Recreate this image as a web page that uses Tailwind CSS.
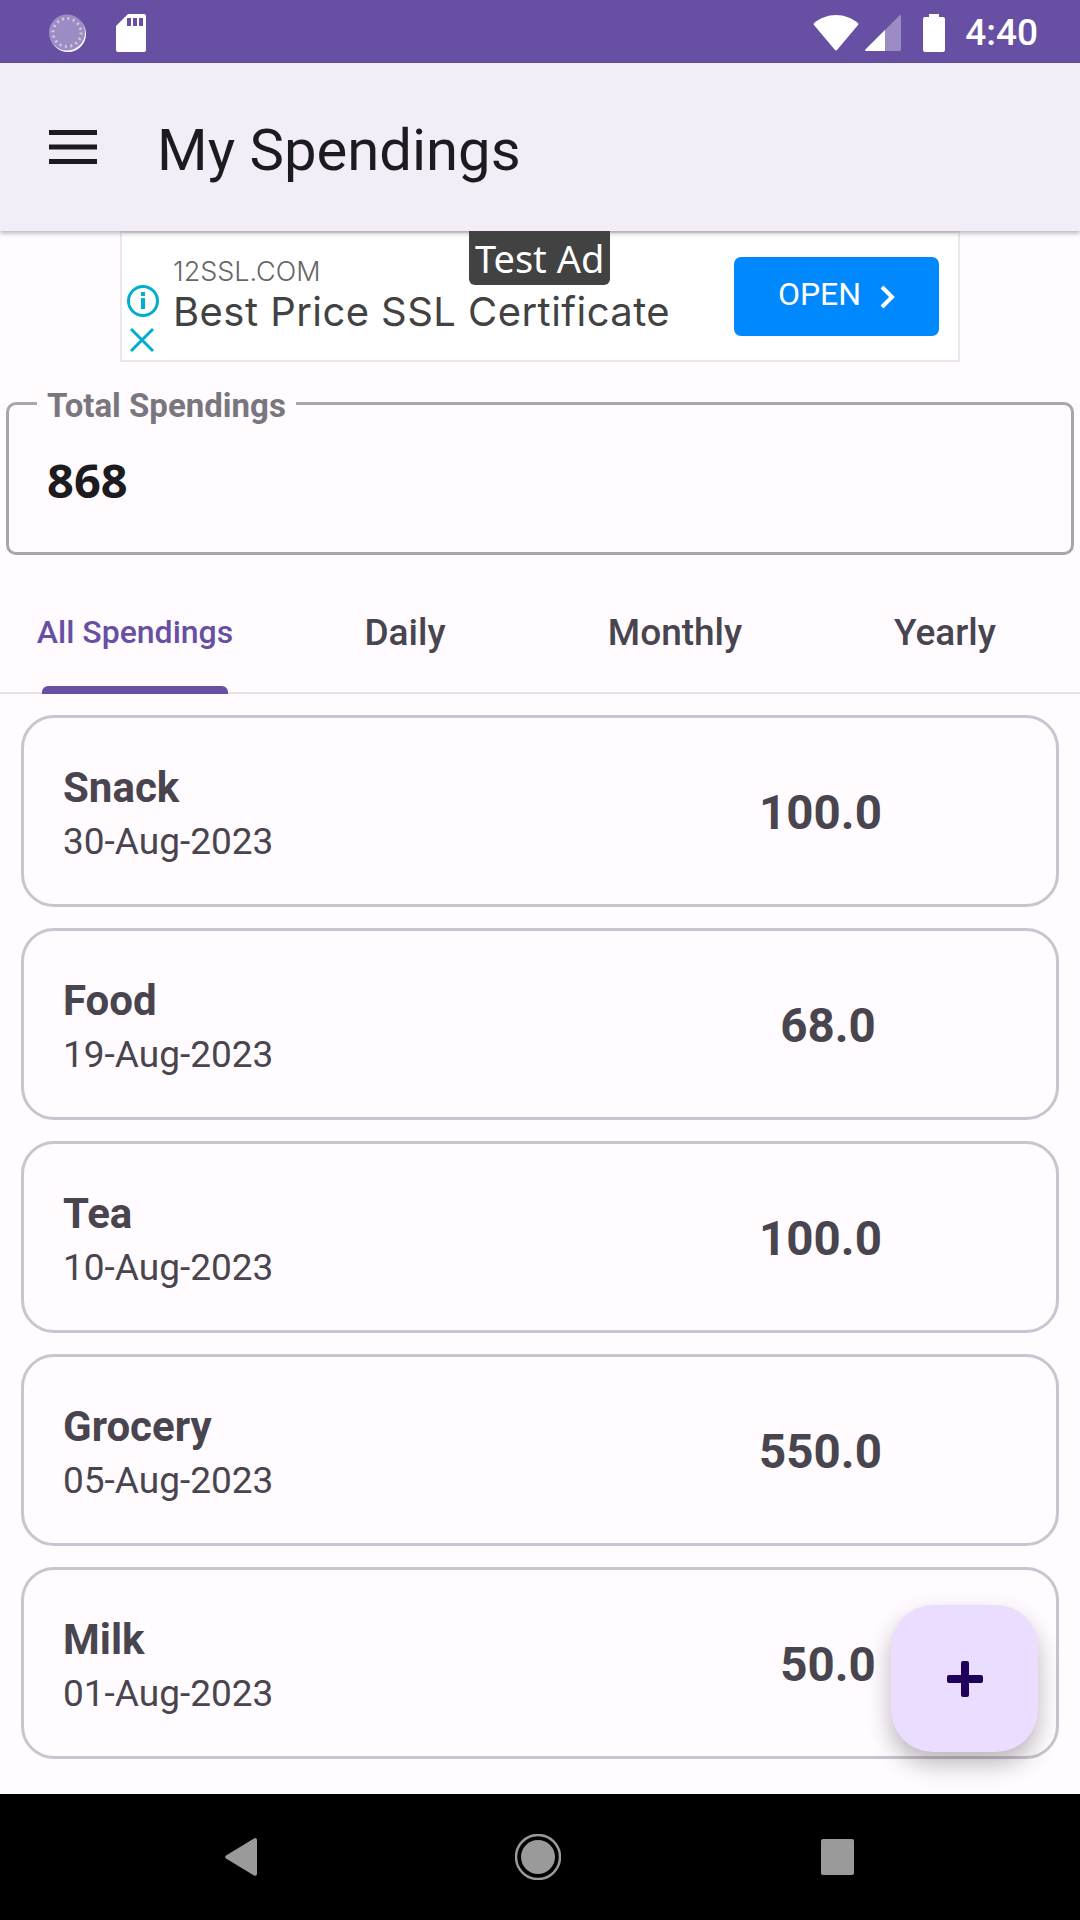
<!DOCTYPE html>
<html lang="en">
<head>
  <meta charset="UTF-8" />
  <meta name="viewport" content="width=device-width, initial-scale=1" />
  <title>My Spendings</title>
  <script src="https://cdn.jsdelivr.net/npm/@tailwindcss/browser@4"></script>
</head>
<body class="bg-[#fffbfe] font-['Roboto',sans-serif] text-[#1c1b1f]">
  <div class="relative flex h-[1920px] w-[1080px] flex-col overflow-hidden">
    <!-- status bar -->
    <div class="flex h-[63px] shrink-0 items-center justify-between bg-[#6750a4] pl-[48px] pr-[42px] pt-[2px] text-white">
      <div class="flex items-center gap-[30px]">
        <svg class="h-[38px] w-[38px]" viewBox="0 0 38 38">
          <circle cx="20" cy="20" r="18" fill="#fff"/>
          <circle cx="19" cy="18.5" r="18" fill="#9c8cc4"/>
          <circle cx="19" cy="18.5" r="14" fill="none" stroke="#cfc6e2" stroke-width="3" stroke-dasharray="2 3.5"/>
        </svg>
        <svg class="h-[38px] w-[30px]" viewBox="0 0 30 38">
          <path d="M12 0h16a2 2 0 0 1 2 2v34a2 2 0 0 1-2 2H2a2 2 0 0 1-2-2V12z" fill="#fff"/>
          <path d="M11 4h4v8h-4zM17 4h4v8h-4zM23 4h4v8h-4z" fill="#6750a4"/>
        </svg>
      </div>
      <div class="flex items-center">
        <svg class="h-[38px] w-[46px]" viewBox="0 0 46 38"><path d="M1 9C7 4 15 1 23 1s16 3 22 8a1.5 1.5 0 0 1 0 2L24 36a1.5 1.5 0 0 1-2 0L1 11a1.5 1.5 0 0 1 0-2z" fill="#fff"/></svg>
        <svg class="ml-[6px] h-[36px] w-[36px]" viewBox="0 0 36 36"><path d="M35 0a1 1 0 0 1 1 1v33a2 2 0 0 1-2 2H1a1 1 0 0 1-1-1z" fill="#9c8cc4"/><path d="M20 15v21H1a1 1 0 0 1-1-1z" fill="#fff"/></svg>
        <svg class="ml-[22px] h-[38px] w-[22px]" viewBox="0 0 22 38"><path d="M6 0h10v3h4a2 2 0 0 1 2 2v31a2 2 0 0 1-2 2H2a2 2 0 0 1-2-2V5a2 2 0 0 1 2-2h4z" fill="#fff"/></svg>
        <span class="ml-[20px] text-[37px] leading-none font-medium">4:40</span>
      </div>
    </div>

    <!-- app bar -->
    <header class="relative z-10 flex h-[168px] shrink-0 items-center bg-[#f3edf7] shadow-[0_2px_5px_rgba(0,0,0,0.3)]">
      <svg class="ml-[49px] h-[34px] w-[48px]" viewBox="0 0 48 34" fill="#1c1b1f">
        <rect y="0" width="48" height="5"/><rect y="14.5" width="48" height="5"/><rect y="29" width="48" height="5"/>
      </svg>
      <h1 class="ml-[60px] pt-[5px] text-[58px] leading-none font-normal">My Spendings</h1>
    </header>

    <!-- test ad -->
    <div class="relative ml-[120px] h-[131px] w-[840px] shrink-0 border-2 border-[#e8e8ec] bg-white">
      <div class="absolute -top-[2px] left-[347px] z-20 flex h-[54px] items-center rounded-b-[6px] bg-[#424242] px-[6px] font-['Noto_Sans',sans-serif] text-[38px] leading-none text-white">Test Ad</div>
      <svg class="absolute left-[4px] top-[51px] h-[34px] w-[34px]" viewBox="0 0 34 34" fill="none" stroke="#00aecd" stroke-width="3">
        <circle cx="17" cy="17" r="14.5"/><path d="M17 14v11" stroke-width="4"/><path d="M17 8v4" stroke-width="4"/>
      </svg>
      <svg class="absolute left-[7px] top-[94px] h-[26px] w-[26px]" viewBox="0 0 26 26" fill="none" stroke="#00aecd" stroke-width="3"><path d="M2 2l22 22M24 2L2 24"/></svg>
      <div class="absolute left-[51px] top-[25px] font-['Inter',sans-serif] text-[27px] leading-none font-light text-[#666]">12SSL.COM</div>
      <div class="absolute left-[51px] top-[59px] font-['Inter',sans-serif] text-[40px] leading-none tracking-[0.44px] text-[#424242]">Best Price SSL Certificate</div>
      <div class="absolute left-[612px] top-[24px] flex h-[79px] w-[205px] items-center justify-center rounded-[7px] bg-[#0088ff] pb-[6px] text-white">
        <span class="text-[32px] leading-none">OPEN</span>
        <svg class="ml-[18px] mt-[6px] h-[24px] w-[16px]" viewBox="0 0 16 24" fill="none" stroke="#fff" stroke-width="4"><path d="M3 2l10 10L3 22"/></svg>
      </div>
    </div>

    <!-- total -->
    <fieldset class="mx-[6px] mt-[22px] h-[171px] shrink-0 rounded-[10px] border-[3px] border-[#a8a6aa] pl-[28px]">
      <legend class="translate-y-[3px] px-[10px] text-[33px] leading-[38px] font-bold text-[#79767d]">Total Spendings</legend>
      <div class="pl-[10px] pt-[28px] font-['Noto_Sans',sans-serif] text-[47px] leading-[60px] font-bold text-[#1c1b1f]">868</div>
    </fieldset>

    <!-- tabs -->
    <nav class="grid h-[139px] shrink-0 grid-cols-4 border-b-2 border-[#e6e0e9] pt-[19px] text-[37px] font-medium text-[#49454f]">
      <div class="relative flex items-center justify-center pb-[2px] text-[32px] text-[#6750a4]">
        All Spendings
        <div class="absolute -bottom-[2px] left-[42px] h-[8px] w-[186px] rounded-t-[6px] bg-[#6750a4]"></div>
      </div>
      <div class="flex items-center justify-center">Daily</div>
      <div class="flex items-center justify-center">Monthly</div>
      <div class="flex items-center justify-center">Yearly</div>
    </nav>

    <!-- spending list -->
    <main class="flex flex-col gap-[21px] px-[21px] pt-[21px]">
      <div class="flex h-[192px] items-center rounded-[33px] border-[3px] border-[#cac4d0] pl-[39px]">
        <div class="w-[655px] pt-[2px] text-[#49454f]">
          <div class="text-[42px] leading-[60px] font-bold">Snack</div>
          <div class="text-[37px] leading-[48px]">30-Aug-2023</div>
        </div>
        <div class="w-[205px] pt-[6px] text-center text-[47.5px] font-bold text-[#49454f]">100.0</div>
      </div>
      <div class="flex h-[192px] items-center rounded-[33px] border-[3px] border-[#cac4d0] pl-[39px]">
        <div class="w-[655px] pt-[2px] text-[#49454f]">
          <div class="text-[42px] leading-[60px] font-bold">Food</div>
          <div class="text-[37px] leading-[48px]">19-Aug-2023</div>
        </div>
        <div class="w-[220px] pt-[6px] text-center text-[47.5px] font-bold text-[#49454f]">68.0</div>
      </div>
      <div class="flex h-[192px] items-center rounded-[33px] border-[3px] border-[#cac4d0] pl-[39px]">
        <div class="w-[655px] pt-[2px] text-[#49454f]">
          <div class="text-[42px] leading-[60px] font-bold">Tea</div>
          <div class="text-[37px] leading-[48px]">10-Aug-2023</div>
        </div>
        <div class="w-[205px] pt-[6px] text-center text-[47.5px] font-bold text-[#49454f]">100.0</div>
      </div>
      <div class="flex h-[192px] items-center rounded-[33px] border-[3px] border-[#cac4d0] pl-[39px]">
        <div class="w-[655px] pt-[2px] text-[#49454f]">
          <div class="text-[42px] leading-[60px] font-bold">Grocery</div>
          <div class="text-[37px] leading-[48px]">05-Aug-2023</div>
        </div>
        <div class="w-[205px] pt-[6px] text-center text-[47.5px] font-bold text-[#49454f]">550.0</div>
      </div>
      <div class="flex h-[192px] items-center rounded-[33px] border-[3px] border-[#cac4d0] pl-[39px]">
        <div class="w-[655px] pt-[2px] text-[#49454f]">
          <div class="text-[42px] leading-[60px] font-bold">Milk</div>
          <div class="text-[37px] leading-[48px]">01-Aug-2023</div>
        </div>
        <div class="w-[220px] pt-[6px] text-center text-[47.5px] font-bold text-[#49454f]">50.0</div>
      </div>
    </main>

    <!-- add button -->
    <button class="absolute left-[891px] top-[1605px] z-10 flex h-[147px] w-[147px] items-center justify-center rounded-[42px] bg-[#eaddff] shadow-[0_12px_24px_rgba(0,0,0,0.28)]">
      <svg class="h-[36px] w-[36px]" viewBox="0 0 36 36" fill="#21005d"><rect x="14" y="0" width="8" height="36" rx="2"/><rect x="0" y="14" width="36" height="8" rx="2"/></svg>
    </button>

    <!-- nav bar -->
    <div class="absolute bottom-0 left-0 flex h-[126px] w-full items-center bg-black">
      <svg class="absolute left-[225px] top-[44px] h-[38px] w-[32px]" viewBox="0 0 32 38"><path d="M30 0a2 2 0 0 1 2 2v34a2 2 0 0 1-3 1.5L1 20.5a2 2 0 0 1 0-3L29 .5z" fill="#9a9a9a"/></svg>
      <svg class="absolute left-[515px] top-[40px] h-[46px] w-[46px]" viewBox="0 0 46 46"><circle cx="23" cy="23" r="22" fill="none" stroke="#9a9a9a" stroke-width="2.5"/><circle cx="23" cy="23" r="17" fill="#9a9a9a"/></svg>
      <div class="absolute left-[821px] top-[45px] h-[36px] w-[33px] rounded-[2px] bg-[#9a9a9a]"></div>
    </div>
  </div>
</body>
</html>
